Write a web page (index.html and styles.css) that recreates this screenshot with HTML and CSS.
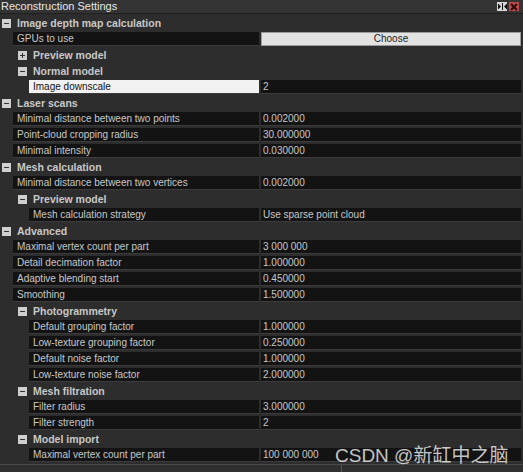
FILE: index.html
```html
<!DOCTYPE html>
<html>
<head>
<meta charset="utf-8">
<link rel="stylesheet" href="styles.css">
</head>
<body>
<div class="panel">
  <div class="titlebar">
    <span class="title">Reconstruction Settings</span>
    <div class="tbtns">
      <span class="tbtn dock"><svg width="9" height="7" viewBox="0 0 9 7"><path d="M0 0.5 L3 3.5 L0 6.5 Z M9 0.5 L6 3.5 L9 6.5 Z" fill="#111"/><rect x="4" y="0" width="1" height="7" fill="#111"/></svg></span>
      <span class="tbtn close"><svg width="8" height="8" viewBox="0 0 8 8"><path d="M1 1 L7 7 M7 1 L1 7" stroke="#2a0a0a" stroke-width="2"/></svg></span>
    </div>
  </div>
  <div class="grid">
    <div class="group l0"><span class="tg minus"></span><span class="gl">Image depth map calculation</span></div>
    <div class="prop l0"><div class="name">GPUs to use</div><div class="val btnval"><span class="choose">Choose</span></div></div>
    <div class="group l1"><span class="tg plus"></span><span class="gl">Preview model</span></div>
    <div class="group l1"><span class="tg minus"></span><span class="gl">Normal model</span></div>
    <div class="prop l1"><div class="name sel">Image downscale</div><div class="val">2</div></div>
    <div class="group l0"><span class="tg minus"></span><span class="gl">Laser scans</span></div>
    <div class="prop l0"><div class="name">Minimal distance between two points</div><div class="val">0.002000</div></div>
    <div class="prop l0"><div class="name">Point-cloud cropping radius</div><div class="val">30.000000</div></div>
    <div class="prop l0"><div class="name">Minimal intensity</div><div class="val">0.030000</div></div>
    <div class="group l0"><span class="tg minus"></span><span class="gl">Mesh calculation</span></div>
    <div class="prop l0"><div class="name">Minimal distance between two vertices</div><div class="val">0.002000</div></div>
    <div class="group l1"><span class="tg minus"></span><span class="gl">Preview model</span></div>
    <div class="prop l1"><div class="name">Mesh calculation strategy</div><div class="val">Use sparse point cloud</div></div>
    <div class="group l0"><span class="tg minus"></span><span class="gl">Advanced</span></div>
    <div class="prop l0"><div class="name">Maximal vertex count per part</div><div class="val">3 000 000</div></div>
    <div class="prop l0"><div class="name">Detail decimation factor</div><div class="val">1.000000</div></div>
    <div class="prop l0"><div class="name">Adaptive blending start</div><div class="val">0.450000</div></div>
    <div class="prop l0"><div class="name">Smoothing</div><div class="val">1.500000</div></div>
    <div class="group l1"><span class="tg minus"></span><span class="gl">Photogrammetry</span></div>
    <div class="prop l1"><div class="name">Default grouping factor</div><div class="val">1.000000</div></div>
    <div class="prop l1"><div class="name">Low-texture grouping factor</div><div class="val">0.250000</div></div>
    <div class="prop l1"><div class="name">Default noise factor</div><div class="val">1.000000</div></div>
    <div class="prop l1"><div class="name">Low-texture noise factor</div><div class="val">2.000000</div></div>
    <div class="group l1"><span class="tg minus"></span><span class="gl">Mesh filtration</span></div>
    <div class="prop l1"><div class="name">Filter radius</div><div class="val">3.000000</div></div>
    <div class="prop l1"><div class="name">Filter strength</div><div class="val">2</div></div>
    <div class="group l1"><span class="tg minus"></span><span class="gl">Model import</span></div>
    <div class="prop l1"><div class="name">Maximal vertex count per part</div><div class="val">100 000 000</div></div>
  </div>
  <div class="footer"><span class="fdiv"></span></div>
  <div class="watermark">CSDN @新缸中之脑</div>
</div>
</body>
</html>
```
FILE: styles.css
```css
html, body {
  margin: 0;
  padding: 0;
  background: #2d2d2d;
}
.panel {
  position: relative;
  width: 523px;
  height: 472px;
  background: #2d2d2d;
  font-family: "Liberation Sans", Arial, sans-serif;
  font-size: 10px;
  color: #c8c8c8;
  overflow: hidden;
}
.titlebar {
  height: 13px;
  border-bottom: 1px solid #1f1f1f;
  background: #333333;
  display: flex;
  align-items: center;
  justify-content: space-between;
}
.title {
  font-size: 11px;
  color: #e6e6e6;
  line-height: 13px;
  padding-left: 1px;
}
.tbtns {
  display: flex;
  gap: 2px;
  padding-right: 4px;
  align-items: center;
}
.tbtn {
  width: 10px;
  height: 9px;
  display: flex;
  align-items: center;
  justify-content: center;
}
.dock { background: #d8d8d8; }
.close { background: #c04848; }
.grid {
  display: flex;
  flex-direction: column;
}
.group, .prop {
  height: 16px;
  box-sizing: border-box;
  display: flex;
  align-items: stretch;
}
.prop {
  padding-top: 2px;
}
.prop .name, .prop .val {
  background: #131313;
  line-height: 14px;
  white-space: nowrap;
  overflow: hidden;
  border-bottom: 1px solid #3c3c3c;
  box-sizing: border-box;
}
.prop .name {
  flex: 1;
  padding-left: 4px;
}
.prop.l0 .name { margin-left: 13px; }
.prop.l1 .name { margin-left: 29px; }
.prop .val {
  width: 260px;
  margin-left: 2px;
  margin-right: 2px;
  padding-left: 2px;
}
.prop .name.sel {
  background: #f2f2f2;
  color: #111;
}
.val.btnval {
  background: #e2e2e2;
  padding: 0;
  display: flex;
  justify-content: center;
  border: 1px solid #9a9a9a;
}
.choose {
  color: #1a1a1a;
  line-height: 12px;
}
.group {
  align-items: center;
  padding-top: 2px;
}
.group.l0 { padding-left: 2px; }
.group.l1 { padding-left: 18px; }
.tg {
  width: 9px;
  height: 9px;
  background: #cfcfcf;
  position: relative;
  flex: none;
}
.tg.minus::before, .tg.plus::before {
  content: "";
  position: absolute;
  left: 2px;
  top: 4px;
  width: 5px;
  height: 1px;
  background: #333;
}
.tg.plus::after {
  content: "";
  position: absolute;
  left: 4px;
  top: 2px;
  width: 1px;
  height: 5px;
  background: #333;
}
.gl {
  font-weight: bold;
  font-size: 10.5px;
  color: #c8c8c8;
  margin-left: 6px;
  line-height: 14px;
}
.footer {
  margin-top: 2px;
  height: 8px;
  border-top: 1px solid #4a4a4a;
  background: #2f2f2f;
  display: flex;
}
.fdiv {
  margin-left: 341px;
  width: 1px;
  background: #555;
}
.watermark {
  position: absolute;
  left: 335px;
  top: 440px;
  font-family: "Liberation Sans", "Noto Sans CJK SC", sans-serif;
  font-size: 19px;
  color: rgba(255, 255, 255, 0.75);
  white-space: nowrap;
}
```
